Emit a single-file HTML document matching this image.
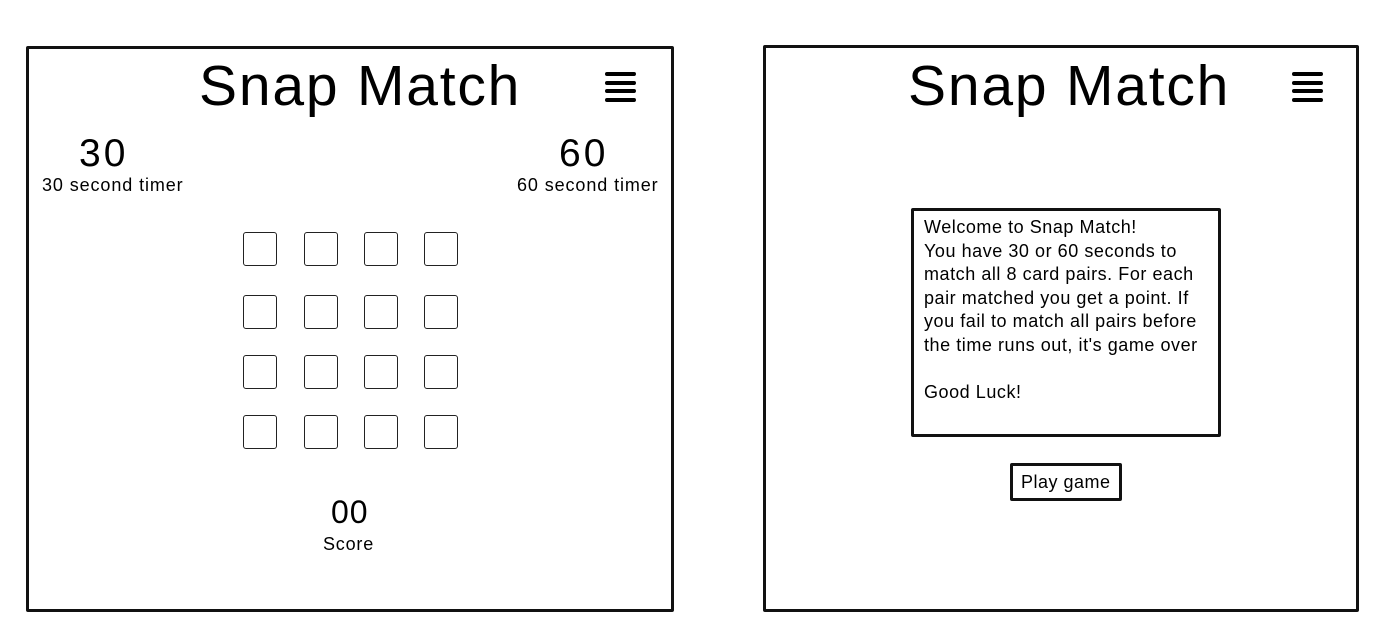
<!DOCTYPE html>
<html><head><style>
body{margin:0;width:1394px;height:623px;background:#fff;position:relative;overflow:hidden;font-family:"Liberation Sans",sans-serif;color:#000}
.a{position:absolute}
.frame{position:absolute;border:3px solid #111;box-sizing:border-box;border-radius:2px}
.ham{position:absolute;width:31px}
.ham i{display:block;height:4px;background:#000;border-radius:2px;margin-bottom:4.5px}
.card{position:absolute;width:34px;height:34px;border:1.5px solid #222;border-radius:3px;box-sizing:border-box}
.t{position:absolute;white-space:nowrap;line-height:1}
</style></head><body>
<div class="frame" style="left:26px;top:46px;width:648px;height:566px"></div>
<div class="frame" style="left:763px;top:45px;width:596px;height:567px"></div>

<div class="t" style="left:199px;top:58px;font-size:57px;letter-spacing:1.8px">Snap Match</div>
<div class="t" style="left:908px;top:58px;font-size:57px;letter-spacing:1.8px">Snap Match</div>

<div class="ham" style="left:605px;top:72px"><i></i><i></i><i></i><i></i></div>
<div class="ham" style="left:1292px;top:72px"><i></i><i></i><i></i><i></i></div>

<div class="t" style="left:79px;top:134px;font-size:39px;letter-spacing:3px">30</div>
<div class="t" style="left:42px;top:176px;font-size:18px;letter-spacing:0.9px">30 second timer</div>
<div class="t" style="left:559px;top:134px;font-size:39px;letter-spacing:3px">60</div>
<div class="t" style="left:517px;top:176px;font-size:18px;letter-spacing:0.9px">60 second timer</div>

<div class="card" style="left:243px;top:232px"></div><div class="card" style="left:304px;top:232px"></div><div class="card" style="left:364px;top:232px"></div><div class="card" style="left:424px;top:232px"></div>
<div class="card" style="left:243px;top:295px"></div><div class="card" style="left:304px;top:295px"></div><div class="card" style="left:364px;top:295px"></div><div class="card" style="left:424px;top:295px"></div>
<div class="card" style="left:243px;top:355px"></div><div class="card" style="left:304px;top:355px"></div><div class="card" style="left:364px;top:355px"></div><div class="card" style="left:424px;top:355px"></div>
<div class="card" style="left:243px;top:415px"></div><div class="card" style="left:304px;top:415px"></div><div class="card" style="left:364px;top:415px"></div><div class="card" style="left:424px;top:415px"></div>

<div class="t" style="left:331px;top:496px;font-size:32px;letter-spacing:1px">00</div>
<div class="t" style="left:323px;top:535px;font-size:18px;letter-spacing:0.8px">Score</div>

<div class="frame" style="left:911px;top:208px;width:310px;height:229px"></div>
<div class="a" style="left:924px;top:216px;font-size:18px;letter-spacing:0.55px;line-height:23.5px;white-space:nowrap">Welcome to Snap Match!<br>You have 30 or 60 seconds to<br>match all 8 card pairs. For each<br>pair matched you get a point. If<br>you fail to match all pairs before<br>the time runs out, it's game over<br><br>Good Luck!</div>

<div class="frame" style="left:1010px;top:463px;width:112px;height:38px"></div>
<div class="t" style="left:1021px;top:473px;font-size:18px;letter-spacing:0.5px">Play game</div>
</body></html>
